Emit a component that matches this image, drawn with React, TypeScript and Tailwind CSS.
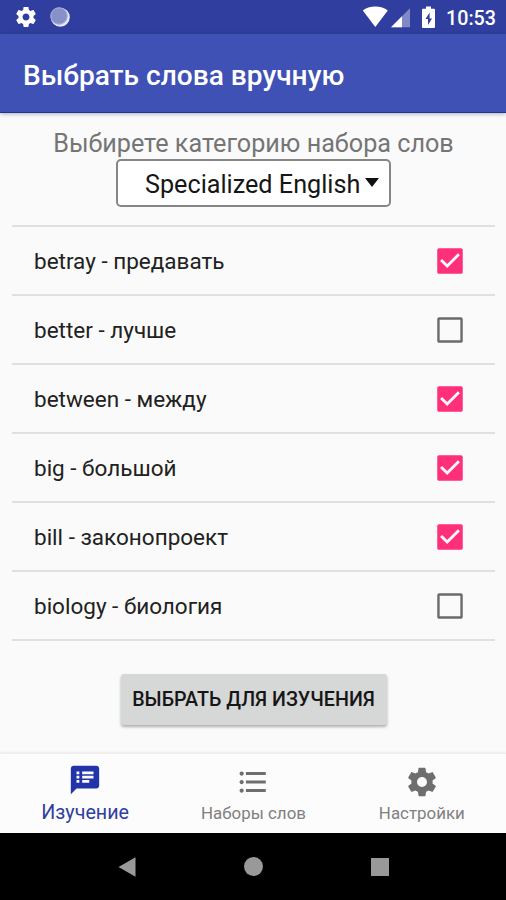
import { useState } from "react";

const GEAR =
  "M19.43 12.98c.04-.32.07-.64.07-.98s-.03-.66-.07-.98l2.11-1.65c.19-.15.24-.42.12-.64l-2-3.46c-.12-.22-.39-.3-.61-.22l-2.49 1c-.52-.4-1.08-.73-1.69-.98l-.38-2.65C14.46 2.18 14.25 2 14 2h-4c-.25 0-.46.18-.49.42l-.38 2.65c-.61.25-1.17.59-1.69.98l-2.49-1c-.23-.09-.49 0-.61.22l-2 3.46c-.13.22-.07.49.12.64l2.11 1.65c-.04.32-.07.65-.07.98s.03.66.07.98l-2.11 1.65c-.19.15-.24.42-.12.64l2 3.46c.12.22.39.3.61.22l2.49-1c.52.4 1.08.73 1.69.98l.38 2.65c.03.24.24.42.49.42h4c.25 0 .46-.18.49-.42l.38-2.65c.61-.25 1.17-.59 1.69-.98l2.49 1c.23.09.49 0 .61-.22l2-3.46c.12-.22.07-.49-.12-.64l-2.11-1.65zM12 15.5c-1.93 0-3.5-1.57-3.5-3.5s1.57-3.5 3.5-3.5 3.5 1.57 3.5 3.5-1.57 3.5-3.5 3.5z";
const NOTES =
  "M20 2H4c-1.1 0-1.99.9-1.99 2L2 22l4-4h14c1.1 0 2-.9 2-2V4c0-1.1-.9-2-2-2zM8 14H6v-2h2v2zm0-3H6V9h2v2zm0-3H6V6h2v2zm7 6h-5v-2h5v2zm3-3h-8V9h8v2zm0-3h-8V6h8v2z";
const LIST =
  "M4 10.5c-.83 0-1.5.67-1.5 1.5s.67 1.5 1.5 1.5 1.5-.67 1.5-1.5-.67-1.5-1.5-1.5zm0-6c-.83 0-1.5.67-1.5 1.5S3.17 7.5 4 7.5 5.5 6.83 5.5 6 4.83 4.5 4 4.5zm0 12c-.83 0-1.5.68-1.5 1.5s.68 1.5 1.5 1.5 1.5-.68 1.5-1.5-.67-1.5-1.5-1.5zM7 19h14v-2H7v2zm0-6h14v-2H7v2zm0-8v2h14V5H7z";
const CHECKED =
  "M19.700 3H4.300C3.600 3 3 3.600 3 4.300v15.400c0 .7.6 1.300 1.300 1.300h15.400c.7 0 1.300-.6 1.300-1.300V4.300c0-.7-.6-1.300-1.300-1.300zm-9.700 14l-5-5 1.410-1.410L10 14.170l7.590-7.590L19 8l-9 9z";
const UNCHECKED =
  "M19.300 4.700v14.600H4.700V4.700h14.600m.4-1.700H4.300C3.600 3 3 3.600 3 4.300v15.400c0 .7.6 1.300 1.300 1.300h15.400c.7 0 1.300-.6 1.300-1.300V4.300c0-.7-.6-1.300-1.300-1.300z";

function Icon({ d, className }: { d: string; className: string }) {
  return (
    <svg viewBox="0 0 24 24" className={className} fill="currentColor">
      <path d={d} />
    </svg>
  );
}

function StatusBar() {
  return (
    <div className="flex h-[34px] items-center bg-[#303f9f] pl-[14px] pr-[10px] text-white">
      <Icon d={GEAR} className="size-6" />
      <svg viewBox="0 0 20 20" className="ml-[12px] size-5">
        <circle cx="10.300" cy="10.300" r="9.500" fill="#e3e7fa" />
        <circle cx="9" cy="9" r="8.500" fill="#8890c8" />
        <circle cx="9" cy="9" r="8.200" fill="none" stroke="#a6addb" strokeWidth="1" />
      </svg>
      <div className="grow" />
      <svg viewBox="0 0 73 24" className="h-6 w-[73px]">
        <path d="M.8 5.600C4 3 8.300 1.500 13.300 1.500S22.500 3 25.800 5.600L13.300 22Z" fill="#fff" />
        <path d="M48 3.200V22.200H29Z" fill="#7f8ac5" />
        <path d="M40 11.200V22.200H29Z" fill="#fff" />
        <path
          fillRule="evenodd"
          fill="#fff"
          d="M64 1.500h5v2.200h3a1 1 0 0 1 1 1V22a1 1 0 0 1-1 1H61a1 1 0 0 1-1-1V4.700a1 1 0 0 1 1-1h3ZM67.600 7.500l-4.100 6.500h2.500V20l4-6.500h-2.400Z"
        />
      </svg>
      <span className="ml-[11px] pt-[3px] text-[19.700px] font-medium leading-6">10:53</span>
    </div>
  );
}

const WORDS = [
  { text: "betray - предавать", on: true },
  { text: "better - лучше", on: false },
  { text: "between - между", on: true },
  { text: "big - большой", on: true },
  { text: "bill - законопроект", on: true },
  { text: "biology - биология", on: false },
];

export default function App() {
  const [words, setWords] = useState(WORDS);
  const toggle = (index: number) =>
    setWords(words.map((w, i) => (i === index ? { ...w, on: !w.on } : w)));

  return (
    <div className="flex h-[900px] w-[506px] flex-col overflow-hidden bg-[#fafafa] font-['Roboto',sans-serif]">
      <StatusBar />
      <header className="flex h-[79px] shrink-0 items-center border-b border-[#1c3597] bg-[#3f51b5] pl-[23px] pt-[5px] shadow-[0_1px_4px_rgba(0,0,0,0.3)]">
        <h1 className="whitespace-nowrap text-[28.100px] font-medium leading-8 text-white">
          Выбрать слова вручную
        </h1>
      </header>

      <main className="flex grow flex-col items-center pl-px">
        <p className="mt-4 whitespace-nowrap text-[25.200px] leading-[30px] text-[#757575]">
          Выбирете категорию набора слов
        </p>
        <button className="flex h-[48px] w-[275px] items-center rounded-[5px] border-2 border-[#868686] bg-white pl-[27px] pt-[3px] text-[25.200px] leading-[30px] text-[#161616]">
          <span className="whitespace-nowrap">Specialized English</span>
          <svg viewBox="0 0 14 9" className="-mt-[5px] ml-[5px] h-[9px] w-[14px] shrink-0">
            <path d="M0 0H14L7 9Z" fill="#111" />
          </svg>
        </button>

        <ul className="mt-[18px] w-[483px] border-t-2 border-[#e0e0e0]">
          {words.map((word, i) => (
            <li
              key={word.text}
              onClick={() => toggle(i)}
              className="flex h-[69px] items-center justify-between border-b-2 border-[#e0e0e0] pl-[22px] pr-[28px] text-[22.500px] text-[#212121]"
            >
              <span className="whitespace-nowrap pt-[2px]">{word.text}</span>
              {word.on ? (
                <Icon d={CHECKED} className="size-[34px] text-[#ff2f7a]" />
              ) : (
                <Icon d={UNCHECKED} className="size-[34px] text-[#6b6b6b]" />
              )}
            </li>
          ))}
        </ul>

        <button className="mt-[33px] h-[51px] w-[266px] whitespace-nowrap rounded-[3px] bg-[#d6d7d7] pt-px text-[19.700px] font-medium text-[#161616] shadow-[0_2px_3px_rgba(0,0,0,0.3)]">
          ВЫБРАТЬ ДЛЯ ИЗУЧЕНИЯ
        </button>
      </main>

      <nav className="grid h-[80px] shrink-0 grid-cols-3 border-t border-[#eeeeee] bg-[#fcfcfc] pl-px shadow-[0_-1px_2px_rgba(0,0,0,0.06)]">
        <div className="flex flex-col items-center pt-[9px] text-[#303f9f]">
          <Icon d={NOTES} className="size-[34px] text-[#2334a9]" />
          <span className="mt-1 text-[19.700px] leading-6">Изучение</span>
        </div>
        <div className="flex flex-col items-center pt-[11px] text-[#808080]">
          <Icon d={LIST} className="size-[34px] text-[#6e6e6e]" />
          <span className="mt-1 text-[16.900px] leading-5">Наборы слов</span>
        </div>
        <div className="flex flex-col items-center pt-[11px] text-[#808080]">
          <Icon d={GEAR} className="size-[34px] text-[#6e6e6e]" />
          <span className="mt-1 text-[16.900px] leading-5">Настройки</span>
        </div>
      </nav>

      <div className="flex h-[67px] shrink-0 items-center bg-black pl-[118px]">
        <svg viewBox="0 0 18 20" className="h-5 w-[18px]">
          <path d="M.5 10 17.500.300V19.700Z" fill="#999" />
        </svg>
        <div className="ml-[108px] size-[19px] rounded-full bg-[#999]" />
        <div className="ml-[108px] size-[18px] bg-[#999]" />
      </div>
    </div>
  );
}
